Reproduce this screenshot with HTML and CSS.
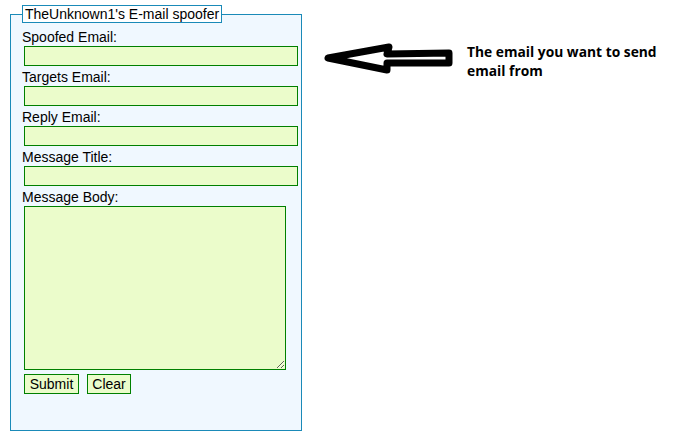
FILE: index.html
```html
<!DOCTYPE html>
<html>
<head>
<meta charset="utf-8">
<title>E-mail spoofer</title>
<link rel="stylesheet" href="styles.css">
</head>
<body>
<div class="page">
  <form class="spoof-form">
    <fieldset class="box">
      <legend class="box-title">TheUnknown1's E-mail spoofer</legend>
      <label class="lbl" for="from">Spoofed Email:</label>
      <input class="field" id="from" type="text">
      <label class="lbl" for="to">Targets Email:</label>
      <input class="field" id="to" type="text">
      <label class="lbl" for="reply">Reply Email:</label>
      <input class="field" id="reply" type="text">
      <label class="lbl" for="title">Message Title:</label>
      <input class="field" id="title" type="text">
      <label class="lbl" for="body">Message Body:</label>
      <textarea class="area" id="body"></textarea>
      <div class="actions">
        <button class="btn btn-submit" type="button">Submit</button>
        <button class="btn btn-clear" type="reset">Clear</button>
      </div>
    </fieldset>
  </form>
  <div class="note">
    <svg class="arrow" width="160" height="40" viewBox="302 40 160 40" aria-hidden="true">
      <polygon points="328,58 389,47 387,54 449,53 449,63 387,63 387,70" fill="#fff" stroke="#000" stroke-width="7" stroke-linejoin="round"/>
    </svg>
    <p class="note-text">The email you want to send email from</p>
  </div>
</div>
</body>
</html>
```

FILE: styles.css
```css
html, body {
  margin: 0;
  padding: 0;
  background: #ffffff;
}

.page {
  display: flex;
  align-items: flex-start;
  font-family: "Liberation Sans", Arial, sans-serif;
  font-size: 14px;
  line-height: 16px;
  color: #000;
}

.spoof-form {
  margin: 5px 0 0 10px;
}

.box {
  box-sizing: border-box;
  width: 292px;
  margin: 0;
  padding: 6px 3px 36px 11px;
  border: 1px solid #1a8ab8;
  background: #f0f8ff;
  display: flex;
  flex-direction: column;
  align-items: flex-start;
}

.box-title {
  padding: 0 2px;
  margin: 0;
  border: 1px solid #1a8ab8;
  background: #ffffff;
  line-height: 16px;
}

.lbl {
  display: block;
  height: 16px;
  line-height: 16px;
  margin-top: 3px;
}

.lbl:first-of-type {
  margin-top: 0;
}

.field {
  box-sizing: border-box;
  width: 274px;
  height: 20px;
  margin: 1px 0 0 2px;
  padding: 0 3px;
  border: 1px solid #008000;
  background: #ebfccb;
  font: inherit;
  outline: none;
}

.area {
  box-sizing: border-box;
  width: 262px;
  height: 164px;
  margin: 1px 0 0 2px;
  padding: 2px;
  border: 1px solid #008000;
  background: #ebfccb;
  font: inherit;
  outline: none;
  display: block;
}

.actions {
  display: flex;
  gap: 8px;
  margin: 4px 0 0 2px;
}

.btn {
  box-sizing: border-box;
  height: 20px;
  padding: 0;
  margin: 0;
  border: 1px solid #008000;
  background: #ebfccb;
  font: inherit;
  line-height: 18px;
  color: #000;
  text-align: center;
}

.btn-submit { width: 55px; }
.btn-clear { width: 44px; }

.note {
  display: flex;
  align-items: flex-start;
  gap: 5px;
  margin-top: 40px;
}

.arrow {
  display: block;
  flex: none;
}

.note-text {
  margin: 2px 0 0 0;
  width: 205px;
  font-family: "Open Sans", "DejaVu Sans", sans-serif;
  font-weight: 700;
  font-size: 13.8px;
  line-height: 19px;
  color: #000;
}
```
